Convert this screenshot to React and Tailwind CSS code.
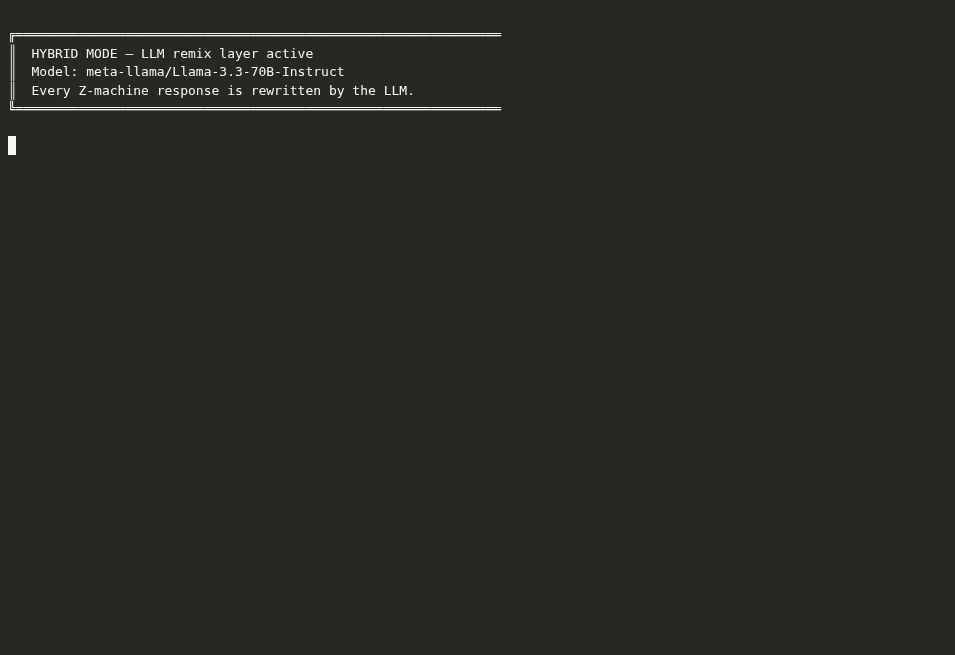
import React from "react";

const TOP = "╔" + "═".repeat(62);
const BOTTOM = "╚" + "═".repeat(62);

const lines = [
  "HYBRID MODE — LLM remix layer active",
  "Model: meta-llama/Llama-3.3-70B-Instruct",
  "Every Z-machine response is rewritten by the LLM.",
];

const Row = ({ children }) => (
  <div className="h-[18.5px] leading-[18.5px] whitespace-pre">{children}</div>
);

export default function App() {
  return (
    <div
      className="w-[955px] h-[655px] overflow-hidden bg-[#272822] text-[#f8f8f2] text-[13px] pl-2 pt-[26px]"
      style={{ fontFamily: '"DejaVu Sans Mono", monospace' }}
    >
      <div className="will-change-transform">
        <Row>{TOP}</Row>
        {lines.map((line) => (
          <Row key={line}>
            <span className="inline-block w-[7.83px] text-[15.5px] leading-[18.5px] align-top text-[#c8c8c2]">
              ║
            </span>
            {"  " + line}
          </Row>
        ))}
        <Row>{BOTTOM}</Row>
        <Row>{""}</Row>
        <Row>
          <span className="inline-block w-[8px] h-[19px] -mt-px align-top bg-[#f8f8f0]" />
        </Row>
      </div>
    </div>
  );
}
